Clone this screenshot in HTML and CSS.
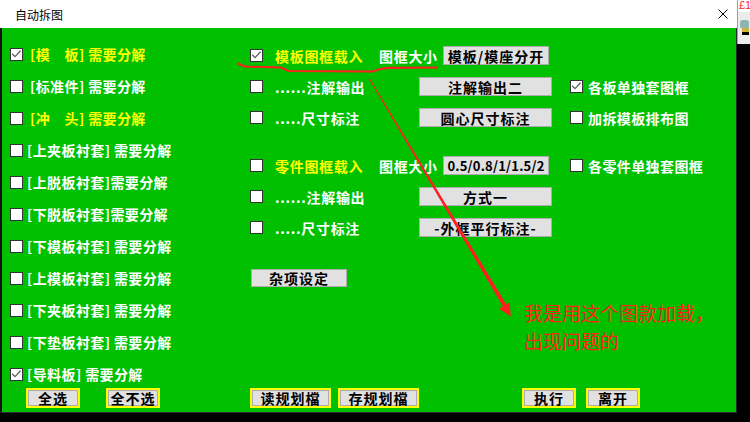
FILE: index.html
```html
<!DOCTYPE html>
<html lang="zh-CN">

<head>
  <meta charset="UTF-8" />
  <meta name="viewport" content="width=device-width, initial-scale=1.0" />
  <title>自动拆图</title>
  <link rel="stylesheet" href="styles.css">
</head>

<body>
  <div class="window">
    <div class="titlebar">
      <span class="title">自动拆图</span>
      <svg class="close" width="10" height="10" viewBox="0 0 10 10">
        <path d="M0.5 0.5L9.5 9.5M9.5 0.5L0.5 9.5" stroke="#000" stroke-width="1" />
      </svg>
    </div>
    <div class="client">
      <div class="panel">
        <!-- 左侧: 各板需要分解 -->
        <div class="col-left">
          <label class="opt yellow"><span class="cb checked pad"><svg viewBox="0 0 11 11"><path d="M1.2 4.8L4 7.6L9.6 1.8" /></svg></span>[模　板] 需要分解</label>
          <label class="opt"><span class="cb pad"></span>[标准件] 需要分解</label>
          <label class="opt yellow"><span class="cb pad"></span>[冲　头] 需要分解</label>
          <label class="opt"><span class="cb"></span>[上夹板衬套] 需要分解</label>
          <label class="opt"><span class="cb"></span>[上脱板衬套]需要分解</label>
          <label class="opt"><span class="cb"></span>[下脱板衬套]需要分解</label>
          <label class="opt"><span class="cb"></span>[下模板衬套] 需要分解</label>
          <label class="opt"><span class="cb"></span>[上模板衬套] 需要分解</label>
          <label class="opt"><span class="cb"></span>[下夹板衬套] 需要分解</label>
          <label class="opt"><span class="cb"></span>[下垫板衬套] 需要分解</label>
          <label class="opt"><span class="cb checked"><svg viewBox="0 0 11 11"><path d="M1.2 4.8L4 7.6L9.6 1.8" /></svg></span>[导料板] 需要分解</label>
        </div>

        <!-- 中间 + 右侧: 图框设定 -->
        <div class="col-main">
          <div class="row">
            <div class="main">
              <span class="cb checked"><svg viewBox="0 0 11 11"><path d="M1.2 4.8L4 7.6L9.6 1.8" /></svg></span>
              <span class="lbl yellow w-title">模板图框载入</span>
              <span class="lbl w-size">图框大小</span>
              <button class="btn w-size-btn">模板/模座分开</button>
            </div>
          </div>
          <div class="row">
            <div class="main">
              <span class="cb"></span>
              <span class="lbl w-sub">......注解输出</span>
              <button class="btn w-wide">注解输出二</button>
            </div>
            <label class="opt side"><span class="cb checked"><svg viewBox="0 0 11 11"><path d="M1.2 4.8L4 7.6L9.6 1.8" /></svg></span>各板单独套图框</label>
          </div>
          <div class="row">
            <div class="main">
              <span class="cb"></span>
              <span class="lbl w-sub">.....尺寸标注</span>
              <button class="btn w-wide">圆心尺寸标注</button>
            </div>
            <label class="opt side"><span class="cb"></span>加拆模板排布图</label>
          </div>

          <div class="row group">
            <div class="main">
              <span class="cb"></span>
              <span class="lbl yellow w-title">零件图框载入</span>
              <span class="lbl w-size">图框大小</span>
              <button class="btn w-size-btn num">0.5/0.8/1/1.5/2</button>
            </div>
            <label class="opt side"><span class="cb"></span>各零件单独套图框</label>
          </div>
          <div class="row">
            <div class="main">
              <span class="cb"></span>
              <span class="lbl w-sub">......注解输出</span>
              <button class="btn w-wide">方式一</button>
            </div>
          </div>
          <div class="row">
            <div class="main">
              <span class="cb"></span>
              <span class="lbl w-sub">.....尺寸标注</span>
              <button class="btn w-wide">-外框平行标注-</button>
            </div>
          </div>

          <div class="row misc">
            <button class="btn w-misc">杂项设定</button>
          </div>
        </div>
      </div>

      <div class="footer">
        <button class="fbtn w-s">全选</button>
        <button class="fbtn w-s gap-a">全不选</button>
        <button class="fbtn w-l gap-b">读规划檔</button>
        <button class="fbtn w-l gap-c">存规划檔</button>
        <button class="fbtn w-s gap-d">执行</button>
        <button class="fbtn w-s gap-e">离开</button>
      </div>
    </div>

    <!-- 截图上的红色标注 -->
    <svg class="marks" width="737" height="413" viewBox="0 0 737 413">
      <path d="M238 63.5L245 66.5L281 67.5L289 71L373 71.5L380 69L388 67.8L438 67.5" fill="none" stroke="#ff1f1f" stroke-width="2.2" stroke-linejoin="round" />
      <polygon points="369.4,77.7 368.6,78.3 503.3,307 506.7,305" fill="#ff1f1f" />
      <polygon points="510.8,316.5 499,308.6 509.6,302.4" fill="#ff1f1f" />
    </svg>
    <div class="note">我是用这个图款加载，<br>出现问题的</div>
  </div>

  <div class="strip">
    <div class="strip-top">£1</div>
    <div class="strip-icon"><span class="icon-a"></span><span class="icon-b"></span></div>
  </div>
</body>

</html>
```

FILE: styles.css
```css
* {
  box-sizing: border-box;
}

body {
  display: flex;
  width: 750px;
  height: 422px;
  margin: 0;
  overflow: hidden;
  background: #000;
  font-family: "Noto Sans CJK SC", "Liberation Sans", sans-serif;
}

.window {
  position: relative;
  display: flex;
  flex-direction: column;
  width: 737px;
  height: 413px;
}

.titlebar {
  display: flex;
  justify-content: space-between;
  align-items: center;
  height: 28px;
  padding: 0 9px 0 15px;
  background: #fff;
}

.title {
  font-size: 12px;
  color: #000;
}

.client {
  flex: 1;
  background: #00c000;
  border-left: 2px solid #111;
  border-right: 1px solid #2a2a2a;
  border-bottom: 1px solid #2a2a2a;
}

.panel {
  display: flex;
}

/* 复选框 */
.cb {
  display: flex;
  flex: none;
  width: 13px;
  height: 13px;
  margin-right: 4px;
  background: #fff;
  border: 1px solid #333;
}

.cb.pad {
  margin-right: 7px;
}

.cb svg {
  display: none;
  width: 11px;
  height: 11px;
}

.cb.checked svg {
  display: block;
}

.cb svg path {
  fill: none;
  stroke: #5c5c5c;
  stroke-width: 1.3;
}

.opt,
.lbl {
  color: #fff;
  font-size: 14px;
  font-weight: 700;
  letter-spacing: 0.4px;
  white-space: nowrap;
}

.opt {
  display: flex;
  align-items: center;
  height: 30px;
}

.yellow {
  color: #ffff00;
}

.col-left {
  display: flex;
  flex-direction: column;
  gap: 2px;
  width: 248px;
  padding: 11px 0 0 8px;
}

.col-main {
  display: flex;
  flex-direction: column;
  padding-top: 12px;
}

.row {
  display: flex;
  align-items: center;
  height: 31px;
}

.row.group {
  margin-top: 17px;
}

.row.misc {
  margin-top: 19px;
}

.main {
  display: flex;
  flex: none;
  align-items: center;
  width: 320px;
}

.main .cb {
  margin-right: 12px;
}

.side .cb {
  margin-right: 5px;
}

.lbl {
  letter-spacing: 0.7px;
}

.w-title {
  width: 104px;
}

.w-size {
  width: 64px;
}

.w-sub {
  width: 144px;
}

/* 灰色按钮 */
.btn,
.fbtn {
  padding: 0;
  background: #e1e1e1;
  color: #000;
  font-family: "Noto Sans CJK SC", "Liberation Sans", sans-serif;
  font-size: 14px;
  font-weight: 700;
  letter-spacing: 1px;
  line-height: 1;
  white-space: nowrap;
}

.btn {
  height: 19px;
  border: 1px solid #adadad;
}

.btn.num {
  font-size: 13px;
  letter-spacing: 0.2px;
}

.w-size-btn {
  width: 106px;
}

.w-wide {
  width: 133px;
}

.w-misc {
  width: 96px;
  height: 18px;
  margin-left: 1px;
}

.footer {
  display: flex;
  margin-top: -1px;
  padding-left: 24px;
}

.fbtn {
  height: 20px;
  border: 2px solid #ffff00;
  box-shadow: inset 0 0 0 1px #adadad;
}

.fbtn.w-s {
  width: 54px;
}

.fbtn.w-l {
  width: 81px;
}

.gap-a {
  margin-left: 26px;
}

.gap-b {
  margin-left: 90px;
}

.gap-c {
  margin-left: 7px;
}

.gap-d {
  margin-left: 103px;
}

.gap-e {
  margin-left: 10px;
}

/* 红色标注 */
.marks {
  position: absolute;
  top: 0;
  left: 0;
  pointer-events: none;
}

.note {
  position: absolute;
  top: 299px;
  left: 524px;
  color: #ff1f1f;
  font-size: 19px;
  line-height: 28px;
  white-space: nowrap;
}

/* 右侧露出的桌面 */
.strip {
  display: flex;
  flex-direction: column;
  width: 13px;
}

.strip-top {
  height: 12px;
  padding-left: 1px;
  background: #fff;
  border-left: 1px solid #a0a0a0;
  color: #ff1f1f;
  font-family: "Liberation Sans", sans-serif;
  font-size: 11px;
  line-height: 11px;
  overflow: hidden;
}

.strip-icon {
  position: relative;
  height: 32px;
  background: #ececec;
  border-left: 1px solid #a0a0a0;
}

.icon-a {
  position: absolute;
  top: 8px;
  left: 2px;
  width: 9px;
  height: 9px;
  background: #8fb5b0;
  border-radius: 3px;
}

.icon-b {
  position: absolute;
  top: 16px;
  left: 4px;
  width: 7px;
  height: 7px;
  background: #c9b43c;
  border-bottom: 3px solid #000;
}
```
